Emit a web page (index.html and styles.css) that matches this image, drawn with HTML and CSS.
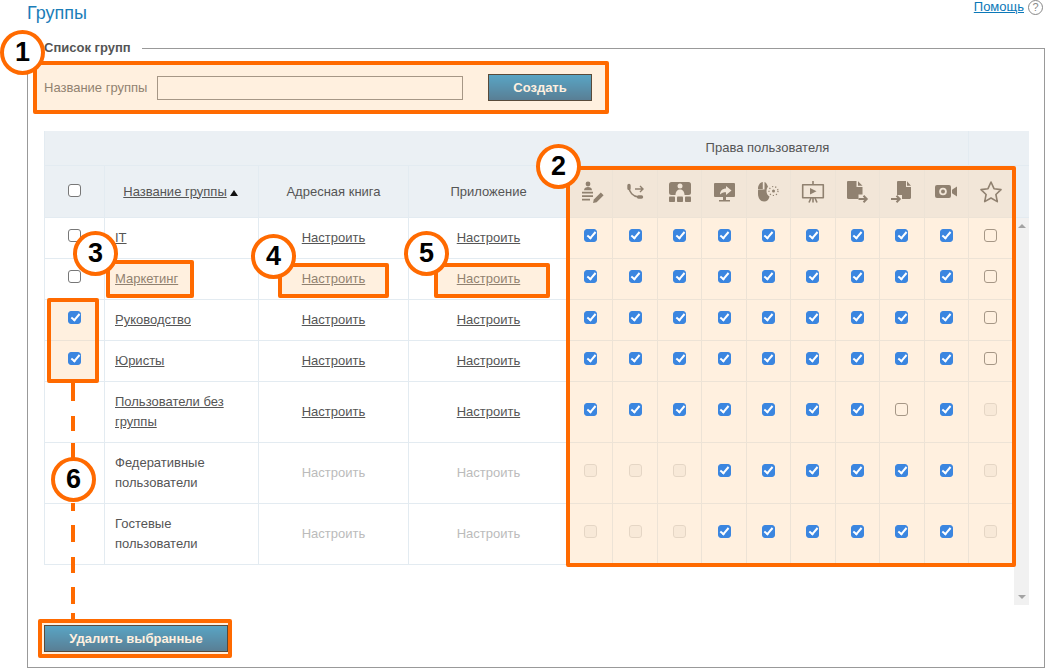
FILE: index.html
```html
<!DOCTYPE html>
<html lang="ru">
<head>
    <meta charset="UTF-8">
    <title>Группы</title>
    <link rel="stylesheet" href="styles.css">
</head>
<body>

<div class="top">
    <h1 class="title">Группы</h1>
    <div class="help"><a href="#">Помощь</a><span class="help-icon">?</span></div>
</div>

<fieldset class="groups">
    <legend>Список групп</legend>

    <!-- New group form -->
    <div class="new-group">
        <label for="group-name">Название группы</label>
        <input type="text" id="group-name" class="text-input">
        <button class="btn btn-create">Создать</button>
    </div>

    <!-- Table head -->
    <table class="grid grid-head">
        <colgroup>
            <col class="c-check"><col class="c-name"><col class="c-book"><col class="c-app">
            <col class="c-right"><col class="c-right"><col class="c-right"><col class="c-right"><col class="c-right">
            <col class="c-right"><col class="c-right"><col class="c-right"><col class="c-right">
            <col class="c-star"><col class="c-bar">
        </colgroup>
        <tr class="head-top">
            <th colspan="4"></th>
            <th colspan="9" class="rights-title">Права пользователя</th>
            <th colspan="2" class="no-right"></th>
        </tr>
        <tr class="head-main">
            <th class="check"><input type="checkbox"></th>
            <th class="sort-head"><a href="#" class="sort-link">Название группы</a><span class="sort-arrow"></span></th>
            <th>Адресная книга</th>
            <th>Приложение</th>
            <th>
                <svg class="ico" viewBox="0 0 26 26"><circle cx="10" cy="5" r="2.4"/><path d="M6 11.2c0-2.2 2-3.2 4-3.2s4 1 4 3.2z"/><path d="M4 12.8h11v1.8H4zM4 16.2h11V18H4zM4 19.8h8v1.8H4z"/><path d="M15 24l.8-3.6 7-7 2.8 2.8-7 7z"/></svg>
            </th>
            <th>
                <svg class="ico" viewBox="0 0 26 26"><path class="line hair" d="M7 8c0 5 4 9.500 9.500 10"/><path class="line blob" d="M7 6.500v3M16.500 18h3"/><path class="line hair" d="M13 10h8M18 7l3 3-3 3"/></svg>
            </th>
            <th>
                <svg class="ico" viewBox="0 0 26 26"><rect x="2" y="3" width="22" height="13" rx="2.500"/><circle class="cut" cx="13" cy="7" r="2.500"/><path class="cut" d="M8.500 16c0-3.500 2-5.500 4.500-5.500s4.500 2 4.500 5.500z"/><rect x="2" y="17.500" width="6" height="5.500" rx=".8"/><rect x="10" y="17.500" width="6" height="5.500" rx=".8"/><rect x="18" y="17.500" width="6" height="5.500" rx=".8"/></svg>
            </th>
            <th>
                <svg class="ico" viewBox="0 0 26 26"><rect x="3" y="4" width="21" height="14" rx="1"/><rect x="12" y="18" width="3" height="3"/><rect x="8" y="21" width="11" height="1.500"/><path class="cut" d="M9 15.500c0-4 3-6 6-6V7l5.500 4.500L15 16v-2.800c-2.500 0-4.500.5-6 2.300z"/></svg>
            </th>
            <th>
                <svg class="ico" viewBox="0 0 26 26"><path d="M7.800 3C5 3.400 3 6 3 10h4.800zM9.500 3v7.500H3.600c-.4 0-.6.400-.6 1.500v3c0 4 2.500 7.500 6 7.500 3 0 5-2 5.500-5-2-1-3-3-3-5.500 0-2 .7-3.300 1.500-4.300C12 5 11 3.400 9.500 3z"/><circle cx="18.500" cy="12" r="1.500"/><circle class="dots" cx="18.500" cy="12" r="4.500"/></svg>
            </th>
            <th>
                <svg class="ico" viewBox="0 0 26 26"><rect class="line thin" x="2.700" y="5.700" width="20.600" height="13"/><path class="line thin" d="M13 2v3.500M13 19v4.500M11 19l-2 4.500M15 19l2 4.500"/><path d="M10 9l6.500 3.200L10 15.500z"/></svg>
            </th>
            <th>
                <svg class="ico" viewBox="0 0 26 26"><path d="M3 3.200C3 2.500 3.500 2 4.200 2H12.500v6h6v7.500h-4V20H4.200C3.500 20 3 19.500 3 18.800z"/><path d="M14 2.300l4.500 4.500H14z"/><path class="line" d="M14.500 20h8M19.500 16.800l3.200 3.200-3.200 3.200"/></svg>
            </th>
            <th>
                <svg class="ico" viewBox="0 0 26 26"><path d="M8 3.200C8 2.500 8.500 2 9.200 2H17v6h5v10.800c0 .7-.5 1.200-1.200 1.200H13v-4H8z"/><path d="M18 2.300l4 4.500h-4z"/><path class="line" d="M2 20h8.500M7.500 16.800l3.200 3.200-3.200 3.200"/></svg>
            </th>
            <th>
                <svg class="ico" viewBox="0 0 26 26"><rect x="2" y="6" width="16" height="13" rx="2"/><circle class="cut" cx="10" cy="12.500" r="3.800"/><circle cx="10" cy="12.500" r="2"/><path d="M19 10.800l5-3.300v10l-5-3.300z"/></svg>
            </th>
            <th colspan="2" class="no-right star-head">
                <svg class="ico star" viewBox="0 0 26 26"><path class="line thin" d="M13 3l3 6.700 7 .9-5.100 4.900 1.400 7.100-6.300-3.600-6.300 3.600 1.400-7.100L3 10.600l7-.9z"/></svg>
            </th>
        </tr>
    </table>

    <!-- Table body with its scrollbar -->
    <div class="grid-scroll">
        <table class="grid grid-body">
            <colgroup>
                <col class="c-check"><col class="c-name"><col class="c-book"><col class="c-app">
                <col class="c-right"><col class="c-right"><col class="c-right"><col class="c-right"><col class="c-right">
                <col class="c-right"><col class="c-right"><col class="c-right"><col class="c-right">
                <col class="c-star">
            </colgroup>
            <tr>
                <td class="check"><input type="checkbox"></td>
                <td class="name"><a href="#">IT</a></td>
                <td><a href="#">Настроить</a></td>
                <td><a href="#">Настроить</a></td>
                <td><input type="checkbox" checked></td><td><input type="checkbox" checked></td><td><input type="checkbox" checked></td>
                <td><input type="checkbox" checked></td><td><input type="checkbox" checked></td><td><input type="checkbox" checked></td>
                <td><input type="checkbox" checked></td><td><input type="checkbox" checked></td><td><input type="checkbox" checked></td>
                <td><input type="checkbox"></td>
            </tr>
            <tr>
                <td class="check"><input type="checkbox"></td>
                <td class="name"><a href="#">Маркетинг</a></td>
                <td><a href="#">Настроить</a></td>
                <td><a href="#">Настроить</a></td>
                <td><input type="checkbox" checked></td><td><input type="checkbox" checked></td><td><input type="checkbox" checked></td>
                <td><input type="checkbox" checked></td><td><input type="checkbox" checked></td><td><input type="checkbox" checked></td>
                <td><input type="checkbox" checked></td><td><input type="checkbox" checked></td><td><input type="checkbox" checked></td>
                <td><input type="checkbox"></td>
            </tr>
            <tr>
                <td class="check"><input type="checkbox" checked></td>
                <td class="name"><a href="#">Руководство</a></td>
                <td><a href="#">Настроить</a></td>
                <td><a href="#">Настроить</a></td>
                <td><input type="checkbox" checked></td><td><input type="checkbox" checked></td><td><input type="checkbox" checked></td>
                <td><input type="checkbox" checked></td><td><input type="checkbox" checked></td><td><input type="checkbox" checked></td>
                <td><input type="checkbox" checked></td><td><input type="checkbox" checked></td><td><input type="checkbox" checked></td>
                <td><input type="checkbox"></td>
            </tr>
            <tr>
                <td class="check"><input type="checkbox" checked></td>
                <td class="name"><a href="#">Юристы</a></td>
                <td><a href="#">Настроить</a></td>
                <td><a href="#">Настроить</a></td>
                <td><input type="checkbox" checked></td><td><input type="checkbox" checked></td><td><input type="checkbox" checked></td>
                <td><input type="checkbox" checked></td><td><input type="checkbox" checked></td><td><input type="checkbox" checked></td>
                <td><input type="checkbox" checked></td><td><input type="checkbox" checked></td><td><input type="checkbox" checked></td>
                <td><input type="checkbox"></td>
            </tr>
            <tr>
                <td class="check"></td>
                <td class="name"><a href="#">Пользователи без группы</a></td>
                <td><a href="#">Настроить</a></td>
                <td><a href="#">Настроить</a></td>
                <td><input type="checkbox" checked></td><td><input type="checkbox" checked></td><td><input type="checkbox" checked></td>
                <td><input type="checkbox" checked></td><td><input type="checkbox" checked></td><td><input type="checkbox" checked></td>
                <td><input type="checkbox" checked></td><td><input type="checkbox"></td><td><input type="checkbox" checked></td>
                <td><input type="checkbox" disabled></td>
            </tr>
            <tr>
                <td class="check"></td>
                <td class="name">Федеративные пользователи</td>
                <td class="off">Настроить</td>
                <td class="off">Настроить</td>
                <td><input type="checkbox" disabled></td><td><input type="checkbox" disabled></td><td><input type="checkbox" disabled></td>
                <td><input type="checkbox" checked></td><td><input type="checkbox" checked></td><td><input type="checkbox" checked></td>
                <td><input type="checkbox" checked></td><td><input type="checkbox" checked></td><td><input type="checkbox" checked></td>
                <td><input type="checkbox" disabled></td>
            </tr>
            <tr>
                <td class="check"></td>
                <td class="name">Гостевые пользователи</td>
                <td class="off">Настроить</td>
                <td class="off">Настроить</td>
                <td><input type="checkbox" disabled></td><td><input type="checkbox" disabled></td><td><input type="checkbox" disabled></td>
                <td><input type="checkbox" checked></td><td><input type="checkbox" checked></td><td><input type="checkbox" checked></td>
                <td><input type="checkbox" checked></td><td><input type="checkbox" checked></td><td><input type="checkbox" checked></td>
                <td><input type="checkbox" disabled></td>
            </tr>
        </table>
        <div class="scrollbar">
            <span class="arrow-up"></span>
            <span class="arrow-down"></span>
        </div>
    </div>

    <button class="btn btn-delete">Удалить выбранные</button>
</fieldset>

<!-- Callouts drawn over the page -->
<svg class="dash" width="4" height="236" viewBox="0 0 4 236"><path d="M2 0v18M2 33v15M2 60v17M2 120v8M2 142v17M2 174v16M2 204v17M2 230v6"/></svg>
<div class="frame f-form"></div>
<div class="frame f-rights"></div>
<div class="frame f-name"></div>
<div class="frame f-book"></div>
<div class="frame f-app"></div>
<div class="frame f-checks"></div>
<div class="frame f-delete"></div>
<div class="badge b1">1</div>
<div class="badge b2">2</div>
<div class="badge b3">3</div>
<div class="badge b4">4</div>
<div class="badge b5">5</div>
<div class="badge b6">6</div>

</body>
</html>
```

FILE: styles.css
```css
body {
    position: relative;
    margin: 0;
    width: 1053px;
    height: 672px;
    overflow: hidden;
    font-family: "Liberation Sans", Arial, sans-serif;
    font-size: 13px;
    color: #555;
    background: #fff;
}

/* Title line */
.top {
    display: flex;
    justify-content: space-between;
    height: 41px;
    padding: 0 10px 0 27px;
}
.title {
    margin: 2px 0 0;
    font-size: 18px;
    font-weight: normal;
    line-height: 22px;
    color: #1b7db8;
}
.help {
    display: flex;
    align-items: flex-start;
    gap: 4px;
    line-height: 14px;
}
.help a {
    color: #0b78b8;
}
.help-icon {
    width: 13px;
    height: 13px;
    margin-top: 0;
    border: 1px solid #888;
    border-radius: 50%;
    font-size: 11px;
    line-height: 13px;
    text-align: center;
    color: #888;
}

/* Main box */
.groups {
    width: 1018px;
    height: 627px;
    box-sizing: border-box;
    margin: 0 0 0 27px;
    padding: 0 0 0 16px;
    border: 1px solid #999;
    min-inline-size: auto;
}
.groups legend {
    padding: 0 11px 0 0;
    font-size: 13px;
    font-weight: bold;
    line-height: 14px;
}
.new-group {
    display: flex;
    align-items: center;
    height: 27px;
    margin-top: 19px;
}
.new-group label {
    width: 113px;
}
.text-input {
    width: 306px;
    height: 24px;
    box-sizing: border-box;
    margin: 0;
    border: 1px solid #777;
    background: #fff;
}
.btn {
    height: 27px;
    border: 1px solid #000;
    background: linear-gradient(#008cd7, #00518d);
    color: #fff;
    font-family: "Liberation Sans", Arial, sans-serif;
    font-size: 13px;
    font-weight: bold;
    padding: 0;
}
.btn-create {
    width: 104px;
    margin-left: 25px;
}
.btn-delete {
    display: block;
    width: 184px;
    margin-top: 20px;
}

/* Table */
.grid {
    table-layout: fixed;
    border-collapse: separate;
    border-spacing: 0;
}
.grid th, .grid td {
    padding: 10px 0;
    border-right: 1px solid #e3ebf1;
    border-bottom: 1px solid #e3ebf1;
    line-height: 20px;
    text-align: center;
    font-weight: normal;
}
.grid th:first-child, .grid td:first-child {
    border-left: 1px solid #e3ebf1;
}
.grid a {
    color: #555;
}
.c-check { width: 61px; }
.c-name { width: 154px; }
.c-book { width: 150px; }
.c-app { width: 160px; }
.c-right { width: 44.44px; }
.c-star { width: 45px; }
.c-bar { width: 15px; }

.grid-head {
    width: 985px;
    margin-top: 30px;
    background: #ebf0f4;
}
.grid-head th {
    height: 34px;
    padding: 0;
}
.head-top th {
    height: 34px;
}
.head-top th:first-child {
    border-right-color: #ebf0f4;
}
.grid-head .rights-title {
    padding-right: 2px;
}
.head-main th {
    height: 51px;
}
.grid-head .sort-head {
    padding-right: 2px;
}
.grid-head .no-right {
    border-right: none;
}
.sort-arrow {
    display: inline-block;
    margin-left: 3px;
    border-left: 4px solid transparent;
    border-right: 4px solid transparent;
    border-bottom: 6px solid #111;
}
.ico {
    display: block;
    width: 26px;
    height: 26px;
    margin: 0 auto;
    fill: #555;
}
.ico .cut {
    fill: #ebf0f4;
}
.ico .line {
    fill: none;
    stroke: #555;
    stroke-width: 2;
}
.ico .thin {
    stroke-width: 1.600;
    stroke-linejoin: round;
}
.ico .hair {
    stroke-width: 1.400;
}
.ico .blob {
    stroke-width: 3.400;
    stroke-linecap: round;
}
.ico .dots {
    fill: none;
    stroke: #555;
    stroke-width: 1.200;
    stroke-dasharray: 1.200 2;
}
.star-head .star {
    margin-left: 9px;
}

.grid-scroll {
    display: flex;
    align-items: flex-start;
    width: 985px;
}
.grid-body {
    width: 970px;
}
.grid-body .name {
    padding-left: 10px;
    padding-right: 10px;
    text-align: left;
}
.grid-body .off {
    color: #bbb;
}
.scrollbar {
    display: flex;
    flex-direction: column;
    justify-content: space-between;
    align-items: center;
    width: 15px;
    height: 387px;
    box-sizing: border-box;
    padding: 6px 0 6px;
    background: #f1f1f1;
}
.arrow-up, .arrow-down {
    border-left: 4px solid transparent;
    border-right: 4px solid transparent;
}
.arrow-up {
    border-bottom: 4px solid #a3a3a3;
}
.arrow-down {
    border-top: 4px solid #a3a3a3;
}

/* Checkboxes */
input[type="checkbox"] {
    appearance: none;
    display: block;
    position: relative;
    width: 13px;
    height: 13px;
    box-sizing: border-box;
    margin: 0 auto 6px;
    border: 1px solid #777;
    border-radius: 3px;
    background: #fff;
}
input[type="checkbox"]:checked {
    z-index: 1;
    border-color: #3b86e0;
    background: #3b86e0;
}
input[type="checkbox"]:checked::before {
    content: "";
    position: absolute;
    left: 3.500px;
    top: .500px;
    width: 3px;
    height: 7px;
    border-right: 2px solid #fff;
    border-bottom: 2px solid #fff;
    transform: rotate(40deg);
}
input[type="checkbox"]:disabled {
    border-color: #d8d8d8;
    background: #f5f5f5;
}
.head-main input[type="checkbox"] {
    margin-bottom: 2px;
}

/* Callouts */
.frame {
    position: absolute;
    box-sizing: border-box;
    border: 4px solid #ff6a00;
    border-radius: 2px;
    background: rgba(255, 212, 164, .35);
}
.f-form { left: 33px; top: 61px; width: 576px; height: 53px; }
.f-rights { left: 566px; top: 166px; width: 450px; height: 401px; }
.f-name { left: 106px; top: 260px; width: 88px; height: 38px; }
.f-book { left: 278px; top: 263px; width: 111px; height: 35px; }
.f-app { left: 434px; top: 263px; width: 116px; height: 35px; }
.f-checks { left: 47px; top: 298px; width: 52px; height: 85px; }
.f-delete { left: 38px; top: 619px; width: 194px; height: 39px; }

.dash {
    position: absolute;
    left: 71px;
    top: 383px;
    stroke: #ff6a00;
    stroke-width: 4;
}
.badge {
    position: absolute;
    z-index: 2;
    width: 45px;
    height: 45px;
    box-sizing: border-box;
    border: 4px solid #ff6a00;
    border-radius: 50%;
    background: #fff;
    color: #000;
    font-size: 27px;
    font-weight: bold;
    line-height: 37px;
    text-align: center;
}
.b1 { left: 0; top: 30px; }
.b2 { left: 536px; top: 144px; }
.b3 { left: 73px; top: 231px; }
.b4 { left: 251px; top: 234px; }
.b5 { left: 404px; top: 231px; }
.b6 { left: 51px; top: 457px; }
```
